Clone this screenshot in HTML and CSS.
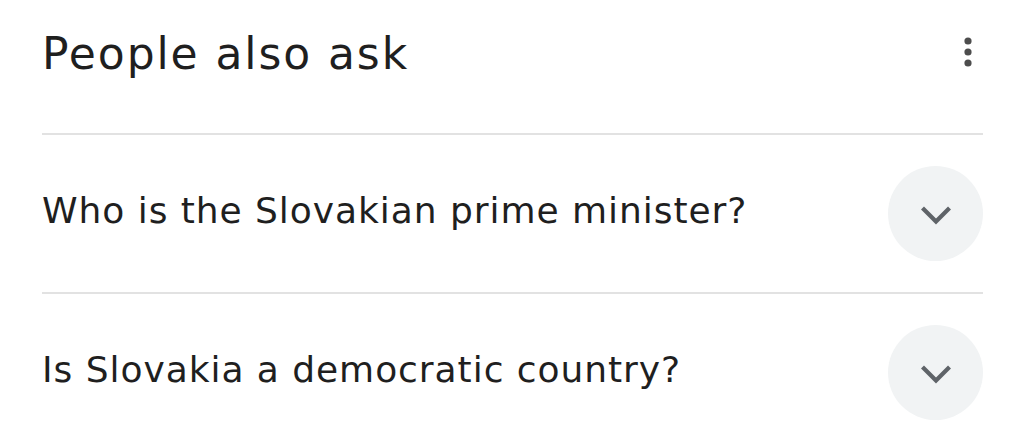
FILE: index.html
```html
<!DOCTYPE html>
<html lang="en">
<head>
<meta charset="utf-8">
<title>People also ask</title>
<link rel="stylesheet" href="styles.css">
</head>
<body>
<section class="paa">
  <header class="paa-header">
    <h2 class="paa-title">People also ask</h2>
    <button class="paa-more" aria-label="More options">
      <svg width="8" height="30" viewBox="0 0 8 30"><circle cx="4" cy="4" r="3.6"/><circle cx="4" cy="15" r="3.6"/><circle cx="4" cy="26" r="3.6"/></svg>
    </button>
  </header>
  <div class="paa-row">
    <span class="paa-q">Who is the Slovakian prime minister?</span>
    <span class="paa-toggle"><svg width="32" height="20" viewBox="0 0 32 20"><path d="M2.5 3 L16 16.5 L29.5 3" fill="none" stroke="#5f6368" stroke-width="4.2"/></svg></span>
  </div>
  <div class="paa-row">
    <span class="paa-q">Is Slovakia a democratic country?</span>
    <span class="paa-toggle"><svg width="32" height="20" viewBox="0 0 32 20"><path d="M2.5 3 L16 16.5 L29.5 3" fill="none" stroke="#5f6368" stroke-width="4.2"/></svg></span>
  </div>
</section>
</body>
</html>
```

FILE: styles.css
```css
html, body {
  margin: 0;
  padding: 0;
  background: #ffffff;
}
body {
  font-family: "DejaVu Sans", Inter, sans-serif;
  color: #1f1f1f;
}
.paa {
  padding: 0 41px 0 42px;
}
.paa-header {
  height: 133px;
  display: flex;
  justify-content: space-between;
  align-items: flex-start;
}
.paa-title {
  margin: 0;
  padding-top: 28px;
  font-size: 44px;
  font-weight: 400;
  line-height: 52px;
  letter-spacing: 1.9px;
}
.paa-more {
  border: 0;
  background: none;
  padding: 0;
  margin: 37px 11px 0 0;
  width: 8px;
  height: 30px;
  fill: #4d4d4d;
}
.paa-more svg { display: block; }
.paa-row {
  border-top: 2px solid #e2e2e2;
  height: 157px;
  display: flex;
  align-items: center;
  justify-content: space-between;
}
.paa-q {
  font-size: 36px;
  line-height: 44px;
  padding-bottom: 6px;
  letter-spacing: 0.95px;
}
.paa-toggle {
  width: 95px;
  height: 95px;
  border-radius: 50%;
  background: #f1f3f4;
  display: flex;
  align-items: center;
  justify-content: center;
}
.paa-toggle svg { display: block; margin-top: 2px; }
```
